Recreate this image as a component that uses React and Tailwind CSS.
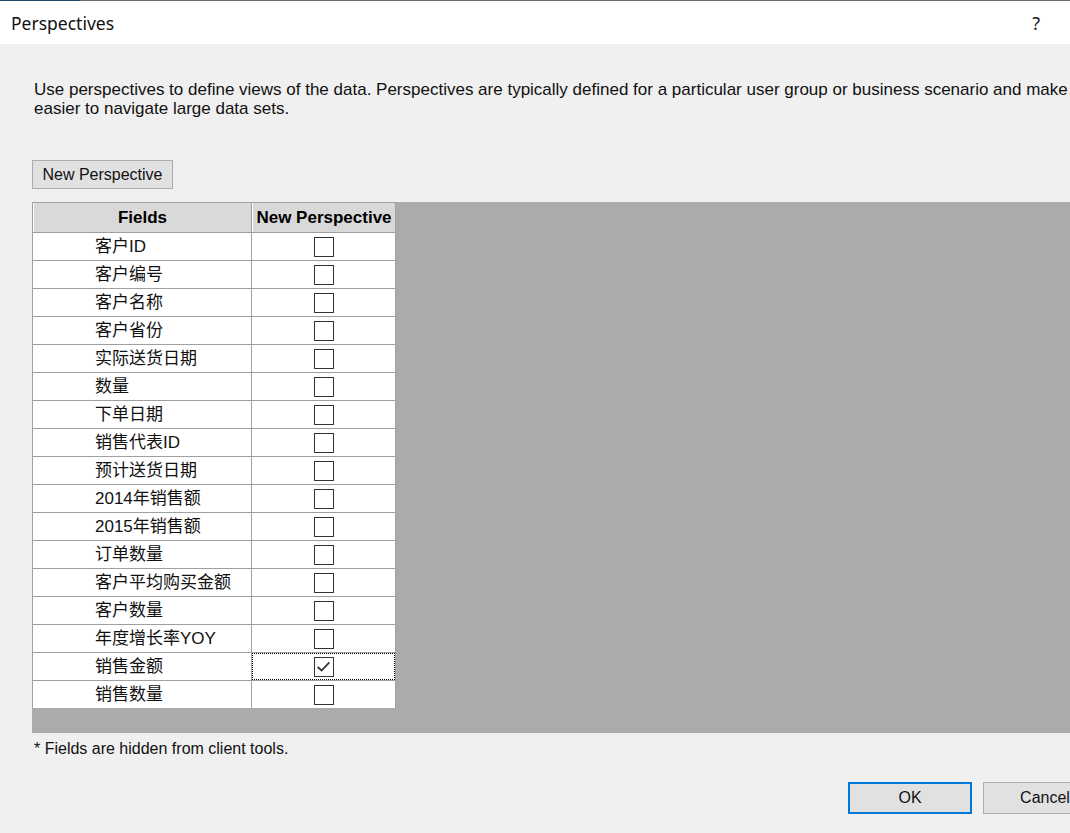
import React from "react";

const fields = [
  "客户ID",
  "客户编号",
  "客户名称",
  "客户省份",
  "实际送货日期",
  "数量",
  "下单日期",
  "销售代表ID",
  "预计送货日期",
  "2014年销售额",
  "2015年销售额",
  "订单数量",
  "客户平均购买金额",
  "客户数量",
  "年度增长率YOY",
  "销售金额",
  "销售数量",
];

const sans = { fontFamily: '"Liberation Sans", Arial, "Noto Sans CJK SC", sans-serif' };

function Check({ checked }) {
  return (
    <div className="w-[20px] h-[20px] border-[1.5px] border-[#333333] bg-white flex items-center justify-center">
      {checked && (
        <svg width="17" height="17" viewBox="0 0 16 16">
          <path d="M2.5 8.5 L6.2 11.8 L13.5 4.2" fill="none" stroke="#333" strokeWidth="1.7" />
        </svg>
      )}
    </div>
  );
}

export default function App() {
  return (
    <div className="w-[1070px] h-[833px] bg-[#f0f0f0] overflow-hidden text-black" style={sans}>
      <div className="h-[44px] bg-white relative flex items-center pt-[3px]">
        <div className="absolute top-0 left-0 right-0 h-px bg-[#6e6e6e]" />
        <div className="absolute top-0 left-0 w-[80px] h-px bg-[#1d4a6b]" />
        <span
          className="ml-[11px] text-[17.5px] text-[#111]"
          style={{ fontFamily: '"Noto Sans", "Open Sans", sans-serif' }}
        >
          Perspectives
        </span>
        <span
          className="ml-auto mr-[30px] text-[18px] text-[#222]"
          style={{ fontFamily: '"Noto Sans", "Open Sans", sans-serif' }}
        >
          ?
        </span>
      </div>

      <div className="pt-[36px] pl-[34px] text-[17px] leading-[19px] whitespace-nowrap text-[#111]">
        <div>
          Use perspectives to define views of the data. Perspectives are typically defined for a particular user group or business scenario and make
        </div>
        <div>easier to navigate large data sets.</div>
      </div>

      <div className="pl-[32px] pt-[42px]">
        <button className="w-[141px] h-[29px] bg-[#e1e1e1] border border-[#adadad] text-[16px] text-[#111] flex items-center justify-center">
          New Perspective
        </button>
      </div>

      <div className="ml-[32px] mt-[13px] h-[531px] bg-[#ababab]">
        <div className="w-[364px] bg-[#a0a0a0] pt-px pl-px flex flex-col gap-px">
          <div className="flex gap-px h-[29px]">
            <div className="w-[218px] bg-[#d9d9d9] border-l border-white flex items-center justify-center font-bold text-[17px]">
              Fields
            </div>
            <div className="w-[143px] bg-[#d9d9d9] border-l border-white flex items-center justify-center font-bold text-[17px]">
              New Perspective
            </div>
          </div>
          {fields.map((f, i) => (
            <div key={f} className="flex gap-px h-[27px]">
              <div className="w-[218px] bg-white flex items-center pl-[62px] pt-px text-[17px] text-[#111]">
                {f}
              </div>
              <div
                className={
                  "w-[143px] bg-white flex items-center justify-center " +
                  (i === 15 ? "outline-1 outline-dotted outline-black -outline-offset-1" : "")
                }
              >
                <Check checked={i === 15} />
              </div>
            </div>
          ))}
        </div>
      </div>

      <div className="pl-[34px] pt-[6px] text-[16px] leading-[20px] text-[#111]">
        * Fields are hidden from client tools.
      </div>

      <div className="flex pl-[848px] pt-[23px] gap-[11px]">
        <button className="w-[124px] h-[32px] shrink-0 bg-[#e1e1e1] border-2 border-[#0078d7] text-[16px] text-[#111] flex items-center justify-center">
          OK
        </button>
        <button className="w-[124px] h-[32px] shrink-0 bg-[#e1e1e1] border border-[#adadad] text-[16px] text-[#111] flex items-center justify-center">
          Cancel
        </button>
      </div>
    </div>
  );
}
